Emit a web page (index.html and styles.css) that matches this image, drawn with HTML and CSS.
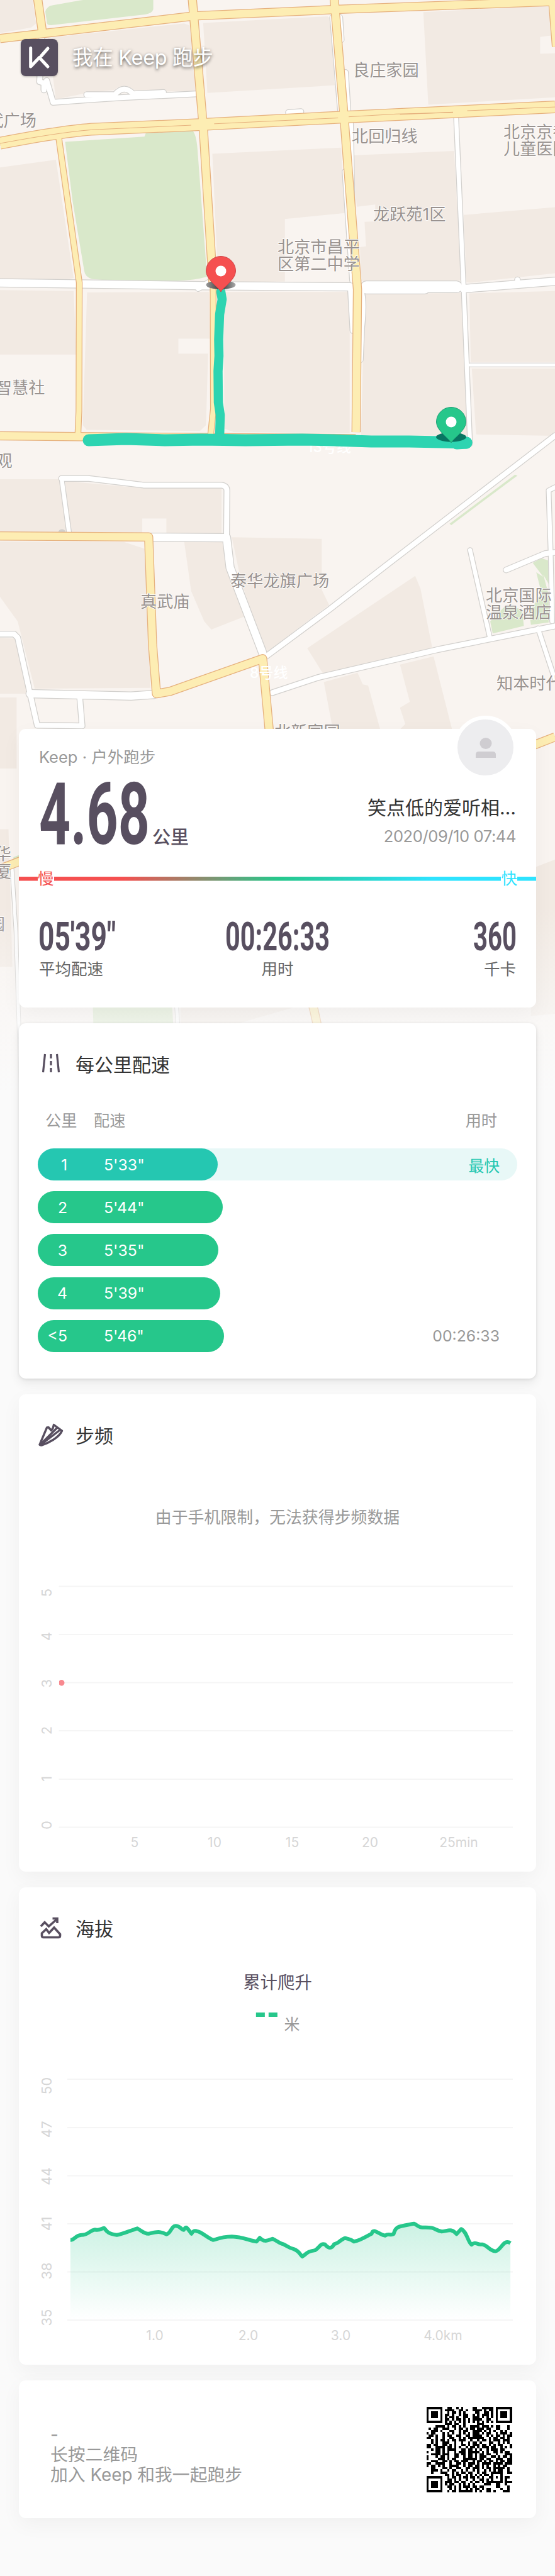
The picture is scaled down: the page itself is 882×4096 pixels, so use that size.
FILE: index.html
```html
<!DOCTYPE html>
<html lang="zh-CN">
<head>
<meta charset="utf-8">
<title>我在 Keep 跑步</title>
<link rel="stylesheet" href="styles.css">
</head>
<body>
<div class="page">
<svg class="map" viewBox="0 0 882 1740" width="882" height="1740">
  <defs>
    <linearGradient id="fade" x1="0" y1="0" x2="0" y2="1"><stop offset="0" stop-color="#fafafa" stop-opacity="0"/><stop offset=".7" stop-color="#fafafa" stop-opacity=".72"/><stop offset="1" stop-color="#fafafa"/></linearGradient>
    <linearGradient id="shade"><stop offset="0" stop-color="#999"/><stop offset=".5" stop-color="#333"/><stop offset="1" stop-color="#aaa"/></linearGradient>
  </defs>
  <rect width="882" height="1740" fill="#f9f4f0"/>
  <g transform="scale(.5625 .3714)">
    <g class="block">
      <path d="M0 0H92L102 100L88 118L0 142Z"/>
      <path d="M135 162L520 100L537 110L552 390L465 392L380 385Q350 350 322 385L240 400L158 425Z"/>
      <path d="M574 98L925 70L934 80L946 365L586 398Z"/>
      <path d="M1196 52L1554 24L1568 150L1526 158V230L1568 228V417L1210 448Z"/>
      <path d="M0 717L158 684L208 1190L195 1195L0 1198Z"/>
      <path d="M600 658L963 632L975 912L805 938V1205L690 1208L616 1195Z"/>
      <path d="M996 665L1283 646L1303 1200L1020 1203L1017 1058L1034 1055L1030 950L1060 948V876L1008 885Z"/>
      <path d="M1310 920L1568 887V1170L1330 1210L1318 1208Z"/>
      <path d="M0 1242L208 1246L216 1518H0Z"/>
      <path d="M246 1252L590 1250L593 1450H504V1514H588L582 1820L565 1845L245 1840L234 1820Z"/>
      <path d="M632 1250H988V1855L660 1850L634 1835Z"/>
      <path d="M1030 1254L1200 1256L1303 1254L1325 1865H1020Z"/>
      <path d="M1326 1256L1568 1246V1550H1330Z"/>
      <path d="M1333 1578H1568V1866L1345 1860Z"/>
      <path d="M0 2052H170L200 2280H0Z"/>
      <path d="M185 2060L405 2090L626 2088V2285H470V2220H402V2280H195Z"/>
      <path d="M0 2318L350 2320L410 2350L425 2945L98 2948L50 2660L0 2555Z"/>
      <path d="M520 2315L635 2320L690 2640L597 2695L577 2660L540 2530Z"/>
      <path d="M655 2300L909 2307V2525L930 2590L755 2790L725 2700L680 2480Z"/>
      <path d="M1173 2466L1188 2520L1222 2780L915 2890L868 2775Z"/>
      <path d="M915 2920L1010 2880L1025 2930L1040 2935L1088 3200L950 3200Z"/>
      <path d="M1130 2845L1225 2810L1290 3200H1080L1145 3100L1130 3030L1158 3005Z"/>
      <path d="M0 2730L50 2735L80 2970H0Z"/>
      <path d="M0 2986H47V3290H0Z"/>
      <path d="M1500 3720L1568 3680V4340L1500 4350Z"/>
      <path d="M0 3550H24L35 4140H0Z"/>
      <path d="M510 4300L860 4300L630 4400L510 4430Z"/>
    </g>
    <g fill="#d9e8ca">
      <path d="M128 50Q132 25 150 22L225 2L235 0H433V40Q430 58 410 62L145 108Q130 108 132 90Z"/>
      <path d="M184 607L408 585L412 570L545 561Q555 580 558 640L585 1185Q550 1200 500 1203H330L260 1195Q240 1185 238 1160L205 860Z"/>
      <path d="M1270 2242L1455 2032L1462 2036L1275 2248ZM1500 1935L1568 1855V1870L1502 1942Z"/>
      <path d="M1505 2410L1530 2390L1550 2400V2500L1535 2460L1550 2545V2665L1500 2675L1495 2620L1530 2540L1515 2450L1535 2470Z"/>
      <path d="M1385 2660L1430 2590L1475 2610L1480 2680L1392 2712Z"/>
      <path d="M262 4300H486L492 4450H265Z"/>
      <path d="M38 3670L55 3660V3690H38Z"/>
    </g>
    <g class="r case white">
      <path class="w9" id="w1" d="M118 160L112 350L124 355V385M132 345L150 438L240 428L340 418L555 402"/>
      <path class="w9" d="M245 405L325 405Q350 360 376 402L462 396"/>
      <path class="w9" d="M815 482L850 478M940 75L963 490M960 75L964 170M976 310L984 500M975 735L996 1200M990 520L996 1000"/>
      <path class="w7" d="M1288 480L1310 1235L1328 1900"/>
      <path class="w12" d="M0 1211L570 1223L990 1228M1310 1236L1568 1204"/>
      <path class="w20" d="M1035 1228H1290M1035 1233H1200"/>
      <path class="w9" d="M1462 1215V1198M560 1235L600 1200M990 1230L997 1415M1020 1240Q1030 1290 1022 1400L1018 1540"/>
      <path class="w5" d="M1328 1562H1568"/>
      <path class="w9" d="M174 2280H176" />
      <path class="w7" d="M195 2280L174 2048"/>
      <path class="w9" d="M174 2048H248L405 2077H625Q641 2080 641 2100L640 2300"/>
      <path class="w12" d="M425 2300L640 2302L650 2430L742 2795"/>
      <path class="w9" d="M752 2810L930 2610L1100 2410L1568 1865"/>
      <path class="w7" d="M1328 2355L1384 2730M1550 2100L1556 2380L1560 2660M1520 2690L1568 2910M1568 2086L1550 2100"/>
      <path class="w9" d="M1430 2440L1540 2370L1568 2365M770 2965L900 2900L1240 2780L1568 2680"/>
      <path class="w9" d="M0 2715H40L50 2730L85 2970L105 3105L232 3108L225 2980"/>
      <path class="w12" d="M85 2970L370 2980L435 2973"/>
      <path class="w5" d="M34 3720L45 3990L60 4700M0 3725L55 3685M498 4290L505 4450"/>
    </g>
    <g class="r fill white">
      <path class="w9" d="M118 160L112 350L124 355V385M132 345L150 438L240 428L340 418L555 402"/>
      <path class="w9" d="M245 405L325 405Q350 360 376 402L462 396"/>
      <path class="w9" d="M815 482L850 478M940 75L963 490M960 75L964 170M976 310L984 500M975 735L996 1200M990 520L996 1000"/>
      <path class="w7" d="M1288 480L1310 1235L1328 1900"/>
      <path class="w12" d="M0 1211L570 1223L990 1228M1310 1236L1568 1204"/>
      <path class="w20" d="M1035 1228H1290M1035 1233H1200"/>
      <path class="w9" d="M1462 1215V1198M560 1235L600 1200M990 1230L997 1415M1020 1240Q1030 1290 1022 1400L1018 1540"/>
      <path class="w5" d="M1328 1562H1568"/>
      <path class="w7" d="M195 2280L174 2048"/>
      <path class="w9" d="M174 2048H248L405 2077H625Q641 2080 641 2100L640 2300"/>
      <path class="w12" d="M425 2300L640 2302L650 2430L742 2795"/>
      <path class="w9" d="M752 2810L930 2610L1100 2410L1568 1865"/>
      <path class="w7" d="M1328 2355L1384 2730M1550 2100L1556 2380L1560 2660M1520 2690L1568 2910M1568 2086L1550 2100"/>
      <path class="w9" d="M1430 2440L1540 2370L1568 2365M770 2965L900 2900L1240 2780L1568 2680"/>
      <path class="w9" d="M0 2715H40L50 2730L85 2970L105 3105L232 3108L225 2980"/>
      <path class="w12" d="M85 2970L370 2980L435 2973"/>
      <path class="w5" d="M34 3720L45 3990L60 4700M0 3725L55 3685M498 4290L505 4450"/>
    </g>
    <g class="r case yellow">
      <path class="w12" d="M106 -10L120 140M543 -10L574 540L602 1220M944 -10L972 500L1010 1240L1006 1850"/>
      <path class="w12" d="M0 165L300 112L550 68L960 40L1568 6M1562 10L1572 200"/>
      <path class="w20" d="M0 613Q200 555 280 552L560 534L960 502L1568 458"/>
      <path class="w9" d="M166 590L224 1210L223 1760L220 1865M602 1220L603 1750L595 1865"/>
      <path class="w12" d="M0 1866L220 1869L1005 1878"/>
      <path class="w12" d="M0 2295L420 2299L431 2760L442 2970L480 2960L742 2820L765 3200L775 3400"/>
      <path class="w12" d="M1500 3195L1568 3155M0 3720L60 3685M865 4200L888 4330L905 4450"/>
    </g>
    <g class="r fill yellow">
      <path class="w12" d="M106 -10L120 140M543 -10L574 540L602 1220M944 -10L972 500L1010 1240L1006 1850"/>
      <path class="w12" d="M0 165L300 112L550 68L960 40L1568 6M1562 10L1572 200"/>
      <path class="w20" d="M0 613Q200 555 280 552L560 534L960 502L1568 458"/>
      <path class="w9" d="M166 590L224 1210L223 1760L220 1865M602 1220L603 1750L595 1865"/>
      <path class="w12" d="M0 1866L220 1869L1005 1878"/>
      <path class="w12" d="M0 2295L420 2299L431 2760L442 2970L480 2960L742 2820L765 3200L775 3400"/>
      <path class="w12" d="M1500 3195L1568 3155M0 3720L60 3685M865 4200L888 4330L905 4450"/>
    </g>
    <path class="median" d="M0 614Q200 558 280 554L540 536M605 530L955 505M985 500L1120 488L1280 482M1320 474L1568 458M1130 490L1280 480"/>
  </g>
  <g class="place">
    <text x="561" y="121">良庄家园</text>
    <text x="58" y="201" text-anchor="end">代广场</text>
    <text x="559" y="225.500">北回归线</text>
    <text x="800" y="218.500">北京京都</text><text x="800" y="246">儿童医院</text>
    <text x="593" y="350">龙跃苑1区</text>
    <text x="441" y="401.500">北京市昌平</text><text x="441" y="429">区第二中学</text>
    <text x="71.400" y="626" text-anchor="end">智慧社</text>
    <text x="19.700" y="742" text-anchor="end">观</text>
    <text x="366" y="933">泰华龙旗广场</text>
    <text x="223" y="966">真武庙</text>
    <text x="772" y="956">北京国际</text><text x="772" y="983">温泉酒店</text>
    <text x="789" y="1096">知本时代</text>
    <text x="436" y="1173">北新家园</text>
    <text x="18" y="1367" text-anchor="end">华</text><text x="18" y="1395" text-anchor="end">厦</text>
    <text x="8" y="1479" text-anchor="end">园</text>
  </g>
  <g class="line-name"><text x="488" y="719">13号线</text><text x="397" y="1078">8号线</text></g>
  <g class="route">
    <path class="route-v" d="M351 464L353 476L349 500L347.500 540L348 566L346.500 590L347 640L350 660L349 695"/>
    <path class="route-h" d="M141 700L170 699L200 698L262 700L320 699L390 700L480 699L530 700L590 702L650 702L700 703L741 704"/>
    <path class="route-h" d="M726 705L741 704"/>
  </g>
  <g transform="translate(351 464)">
    <ellipse cx="0" cy="-11" rx="23.500" ry="7" fill="url(#shade)"/>
    <path d="M0 0C-3 -7 -23.500 -19 -23.500 -33A23.500 23.500 0 0 1 23.500 -33C23.500 -19 3 -7 0 0Z" fill="#f55050" stroke="#cf4548"/>
    <circle cy="-33" r="8.500" fill="#fff"/>
  </g>
  <g transform="translate(717 704)">
    <ellipse cx="0" cy="-9" rx="24" ry="7.500" fill="#087562"/>
    <path d="M0 0C-3 -7 -23.500 -19 -23.500 -33A23.500 23.500 0 0 1 23.500 -33C23.500 -19 3 -7 0 0Z" fill="#26c78b" stroke="#1e9f75"/>
    <circle cy="-33" r="8.500" fill="#fff"/>
  </g>
  <rect y="1440" width="882" height="300" fill="url(#fade)"/>
</svg>

<header class="top">
  <svg class="logo" viewBox="0 0 59 59" width="59" height="59"><path d="M15.700 14.500V44L29.500 29.500L43 44M43 15L32.500 27" fill="none" stroke="#fff" stroke-width="5" stroke-linecap="round" stroke-linejoin="round"/></svg>
  <h1 class="top-title">我在 Keep 跑步</h1>
</header>

<main class="cards">
  <section class="card summary">
    <div class="avatar"><svg viewBox="0 0 36 32" width="36" height="32"><ellipse cx="18" cy="9" rx="9.500" ry="9" fill="#cfcdd1"/><path d="M2 32V27Q2 22 7 22H29Q34 22 34 27V32Z" fill="#cfcdd1"/></svg></div>
    <div class="kind">Keep · 户外跑步</div>
    <div class="summary-main">
      <div class="distance">
        <svg class="din" width="176" height="104"><text x="0" y="101" font-size="137" textLength="176" lengthAdjust="spacingAndGlyphs">4.68</text></svg>
        <span class="unit">公里</span>
      </div>
      <div class="who"><div class="name">笑点低的爱听相…</div><div class="date">2020/09/10 07:44</div></div>
    </div>
    <div class="speed"><span class="slow">慢</span><span class="fast">快</span></div>
    <div class="stats">
      <div class="stat"><svg class="din" width="122" height="50"><text x="-1" y="48" font-size="63" textLength="123" lengthAdjust="spacingAndGlyphs">05′39″</text></svg><span>平均配速</span></div>
      <div class="stat mid"><svg class="din" width="166" height="50"><text x="0" y="48" font-size="63" textLength="166" lengthAdjust="spacingAndGlyphs">00:26:33</text></svg><span>用时</span></div>
      <div class="stat end"><svg class="din" width="68" height="50"><text x="0" y="48" font-size="63" textLength="69" lengthAdjust="spacingAndGlyphs">360</text></svg><span>千卡</span></div>
    </div>
  </section>

  <section class="card pace">
    <h2 class="card-title"><svg class="icon" viewBox="0 0 40 40" width="40" height="40" fill="none" stroke="#584f60" stroke-width="3.200"><path d="M10.500 5L7.500 34M29.500 5L32.500 34M20 5V12M20 16V23M20 27V34"/></svg>每公里配速</h2>
    <div class="pace-head"><span class="c1">公里</span><span class="c2">配速</span><span>用时</span></div>
    <div class="rows">
      <div class="row best"><div class="bar" style="width:286px"><b>1</b><i>5'33"</i></div><em>最快</em></div>
      <div class="row"><div class="bar" style="width:294px"><b>2</b><i>5'44"</i></div></div>
      <div class="row"><div class="bar" style="width:287px"><b>3</b><i>5'35"</i></div></div>
      <div class="row"><div class="bar" style="width:290px"><b>4</b><i>5'39"</i></div></div>
      <div class="row"><div class="bar" style="width:296px"><b>&lt;5</b><i>5'46"</i></div><em>00:26:33</em></div>
    </div>
  </section>

  <section class="card cadence">
    <h2 class="card-title"><svg class="icon" viewBox="0 0 40 40" width="40" height="40" fill="none" stroke="#584f60" stroke-width="3.400" stroke-linejoin="round" stroke-linecap="round"><path d="M2.500 35L13.500 9L16 8.500L20.500 13.500L23 10L24.500 4.500L37.500 14C33 25 15 34 5 37Q1 37 2.500 35ZM4 35L29.500 9.500M4 36L34 13"/></svg>步频</h2>
    <p class="notice">由于手机限制，无法获得步频数据</p>
    <svg class="chart" viewBox="30 2507 822 445" width="822" height="445">
      <path class="grid" d="M93.500 2522.500H815M93.500 2599H815M93.500 2675.500H815M93.500 2752H815M93.500 2829H815M93.500 2905.500H815"/>
      <path d="M94 2673A4.700 4.700 0 1 1 94 2678.500Z" fill="#f8898f"/>
      <g class="ylab">
        <text transform="translate(81.500 2532.600) rotate(-90)">5</text><text transform="translate(81.500 2602) rotate(-90)">4</text><text transform="translate(81.500 2676.600) rotate(-90)">3</text><text transform="translate(81.500 2751.600) rotate(-90)">2</text><text transform="translate(81.500 2828.300) rotate(-90)">1</text><text transform="translate(81.500 2902) rotate(-90)">0</text>
      </g>
      <g class="xlab"><text x="214" y="2937">5</text><text x="341" y="2937">10</text><text x="464.500" y="2937">15</text><text x="588" y="2937">20</text><text x="729" y="2937">25min</text></g>
    </svg>
  </section>

  <section class="card climb">
    <h2 class="card-title"><svg class="icon" viewBox="0 0 40 40" width="40" height="40" fill="none" stroke="#584f60" stroke-width="3.600" stroke-linejoin="miter"><path d="M4 18L10 11.500L16.500 18L29 7M22.500 5.500H30V13M5.500 33V29L12.500 22.500L17 28.500L25 20L34.500 30.500V33Q34.500 35.500 32 35.500H8Q5.500 35.500 5.500 33Z"/></svg>海拔</h2>
    <p class="climb-label">累计爬升</p>
    <svg class="climb-value" viewBox="30 3170 822 60" width="822" height="60"><text class="dash" x="404" y="3223" font-size="63" textLength="40" lengthAdjust="spacingAndGlyphs">--</text><text class="meter" x="464" y="3228">米</text></svg>
    <svg class="chart" viewBox="30 3290 822 445" width="822" height="445">
      <defs><linearGradient id="area" gradientUnits="userSpaceOnUse" x1="0" y1="1105" x2="0" y2="1419"><stop offset="0" stop-color="#26c78b" stop-opacity=".24"/><stop offset="1" stop-color="#26c78b" stop-opacity="0"/></linearGradient></defs>
      <path class="grid" d="M107 3306H815M107 3383H815M107 3459.500H815M107 3536H815M107 3612.500H815M107 3689H815"/>
      <g transform="translate(0 2982.400) scale(.5625 .4981)">
        <path fill="url(#area)" d="M199 1163C211 1163 212 1148 230 1147C250 1147 252 1133 268 1130C281 1134 287 1126 294 1125C300 1130 300 1143 330 1147C350 1143 365 1134 388 1126C400 1134 408 1144 420 1143C440 1138 450 1133 470 1145C482 1144 484 1117 497 1118C510 1119 514 1132 519 1131C526 1118 526 1120 541 1143C548 1130 552 1134 556 1135C570 1137 584 1155 602 1163C615 1162 616 1153 655 1152C685 1153 705 1165 725 1168L734 1156C744 1168 750 1168 770 1159C782 1165 790 1175 800 1176C815 1184 815 1188 830 1192C845 1198 848 1210 854 1216C868 1206 866 1200 890 1196C903 1188 905 1172 918 1177C927 1190 937 1193 944 1176C955 1176 965 1159 975 1157C990 1162 990 1160 1000 1168C1020 1164 1040 1148 1050 1143C1055 1122 1070 1146 1088 1149C1098 1141 1105 1150 1112 1144C1118 1118 1125 1120 1170 1111C1180 1116 1182 1124 1195 1123C1232 1121 1226 1132 1248 1136C1265 1135 1275 1124 1290 1144L1303 1128C1320 1138 1320 1165 1332 1178C1344 1166 1348 1180 1363 1177C1380 1182 1383 1198 1400 1199C1415 1197 1423 1158 1442 1173V1419H199Z"/>
        <path class="curve" d="M199 1163C211 1163 212 1148 230 1147C250 1147 252 1133 268 1130C281 1134 287 1126 294 1125C300 1130 300 1143 330 1147C350 1143 365 1134 388 1126C400 1134 408 1144 420 1143C440 1138 450 1133 470 1145C482 1144 484 1117 497 1118C510 1119 514 1132 519 1131C526 1118 526 1120 541 1143C548 1130 552 1134 556 1135C570 1137 584 1155 602 1163C615 1162 616 1153 655 1152C685 1153 705 1165 725 1168L734 1156C744 1168 750 1168 770 1159C782 1165 790 1175 800 1176C815 1184 815 1188 830 1192C845 1198 848 1210 854 1216C868 1206 866 1200 890 1196C903 1188 905 1172 918 1177C927 1190 937 1193 944 1176C955 1176 965 1159 975 1157C990 1162 990 1160 1000 1168C1020 1164 1040 1148 1050 1143C1055 1122 1070 1146 1088 1149C1098 1141 1105 1150 1112 1144C1118 1118 1125 1120 1170 1111C1180 1116 1182 1124 1195 1123C1232 1121 1226 1132 1248 1136C1265 1135 1275 1124 1290 1144L1303 1128C1320 1138 1320 1165 1332 1178C1344 1166 1348 1180 1363 1177C1380 1182 1383 1198 1400 1199C1415 1197 1423 1158 1442 1173"/>
      </g>
      <g class="ylab">
        <text transform="translate(81.500 3316.600) rotate(-90)">50</text><text transform="translate(81.500 3386) rotate(-90)">47</text><text transform="translate(81.500 3460.500) rotate(-90)">44</text><text transform="translate(81.500 3536) rotate(-90)">41</text><text transform="translate(81.500 3611) rotate(-90)">38</text><text transform="translate(81.500 3685) rotate(-90)">35</text>
      </g>
      <g class="xlab"><text x="246" y="3720.500">1.0</text><text x="394.500" y="3720.500">2.0</text><text x="541.500" y="3720.500">3.0</text><text x="704" y="3720.500">4.0km</text></g>
    </svg>
  </section>

  <section class="card invite">
    <div class="invite-text"><p>-</p><p>长按二维码</p><p>加入 Keep 和我一起跑步</p></div>
    <svg class="qr" id="qr" viewBox="0 0 37 37" width="137" height="136" shape-rendering="crispEdges"></svg>
  </section>
</main>
</div>
<script src="qr.js"></script>
</body>
</html>
```
FILE: styles.css
```css
body { margin: 0; background: #fafafa; font-family: Inter, "Noto Sans CJK SC", sans-serif; color: #333; }
.page { position: relative; width: 882px; height: 4096px; overflow: hidden; }
.map { position: absolute; left: 0; top: 0; display: block; }
.block { fill: #f2eae3; }
.r path, .median, .curve { fill: none; vector-effect: non-scaling-stroke; stroke-linejoin: round; }
.r path { stroke-linecap: round; }
.yellow path { stroke-linecap: butt; }
.case.white path { stroke: #d2d0cd; }
.fill.white path { stroke: #fff; }
.case.yellow path { stroke: #e6b17e; }
.fill.yellow path { stroke: #fdedb3; }
.case .w5 { stroke-width: 7px; } .fill .w5 { stroke-width: 5px; }
.case .w7 { stroke-width: 9px; } .fill .w7 { stroke-width: 6.5px; }
.case .w9 { stroke-width: 10.5px; } .fill .w9 { stroke-width: 8px; }
.case .w12 { stroke-width: 14.5px; } .fill .w12 { stroke-width: 12px; }
.case .w20 { stroke-width: 20px; } .fill .w20 { stroke-width: 17.5px; }
.median { stroke: #e6b17e; stroke-width: 1px; }
.place { font-size: 26.2px; fill: #99928f; stroke: #fff; stroke-width: 1.5px; paint-order: stroke; }
.line-name { font-size: 23px; font-weight: 500; fill: #fff; }
.route { fill: none; stroke: #2dd4b1; stroke-linecap: round; stroke-linejoin: round; }
.route-v { stroke-width: 14.5px; }
.route-h { stroke-width: 19px; }

.top { position: relative; display: flex; align-items: center; gap: 23px; padding: 62px 0 0 33px; height: 59px; }
.logo { background: #584f60; border-radius: 8px; box-shadow: 0 1px 3px rgba(0,0,0,.3); }
.top-title { margin: 0; font-size: 32.5px; line-height: 59px; font-weight: 400; color: #fff; text-shadow: 0 2px 5px rgba(0,0,0,.65); letter-spacing: -.3px; }

.cards { position: relative; display: flex; flex-direction: column; gap: 25px; padding: 1038px 30px 0; }
.card { position: relative; box-sizing: border-box; border-radius: 11px; background: #fff; box-shadow: 0 10px 32px rgba(0,0,0,.045); }
.summary { height: 443px; padding: 27px 32px 0; }
.avatar { position: absolute; right: 30px; top: -21px; width: 89px; height: 89px; border: 6px solid #fff; border-radius: 50%; background: #ededef; display: flex; align-items: center; justify-content: center; }
.kind { font-size: 25.5px; line-height: 36px; color: #999; }
.summary-main { height: 123px; display: flex; justify-content: space-between; align-items: flex-end; }
.din { display: block; overflow: visible; font-family: Roboto, sans-serif; font-weight: 700; fill: #584f60; }
.distance { display: flex; align-items: flex-end; gap: 4px; }
.unit { font-size: 29px; line-height: 32px; font-weight: 500; color: #584f60; margin-bottom: -3px; }
.who { text-align: right; }
.name { font-size: 30px; line-height: 42px; }
.date { font-size: 25.5px; line-height: 36px; color: #999; margin: 7px 0 -3px; letter-spacing: -.4px; }
.speed { margin: 34px -32px 0; padding: 0 30px; height: 36px; display: flex; justify-content: space-between; align-items: center; font-size: 25.5px; line-height: 36px; background: linear-gradient(90deg, #f55050 20%, #26c78b 50%, #2ee3ff 80%) center / 100% 6.5px no-repeat; }
.speed span { background: #fff; }
.slow { color: #f55050; }
.fast { color: #2ee3ff; }
.stats { margin-top: 48px; display: grid; grid-template-columns: 1fr 1fr 1fr; }
.stat { display: flex; flex-direction: column; gap: 10px; font-size: 25.5px; line-height: 36px; color: #666; }
.mid { align-items: center; }
.end { align-items: flex-end; }

.card-title { margin: 0; display: flex; align-items: center; gap: 19px; height: 40px; font-size: 30px; font-weight: 400; color: #333; }
.pace, .cadence, .climb { padding-top: 44px; }
.pace .card-title, .cadence .card-title, .climb .card-title { padding-left: 31px; }
.pace { height: 565px; box-shadow: 0 8px 16px rgba(0,0,0,.07), 0 1px 5px rgba(0,0,0,.1); }
.pace-head { display: flex; padding: 0 62px 0 42px; margin-top: 53px; line-height: 36px; font-size: 25.2px; color: #999; }
.c1 { width: 77px; }
.c2 { flex: 1; }
.rows { margin: 26px 30px 0; display: grid; gap: 17.2px; }
.row { height: 51px; border-radius: 26px; display: flex; justify-content: space-between; align-items: center; padding-right: 28px; font-size: 24.8px; color: #999; }
.best { background: #e8f8f7; color: #25c7b1; }
.bar { height: 51px; border-radius: 26px; background: #26c78b; color: #fff; display: flex; align-items: center; }
.best .bar { background: #25c7b1; }
.bar b { width: 47px; text-align: right; font-weight: 400; }
.bar i { font-style: normal; margin-left: 58px; }
.row em { font-style: normal; }

.cadence { height: 759px; }
.notice { margin: 94px 0 76px; text-align: center; font-size: 25.9px; line-height: 36px; color: #999; }
.chart, .climb-value { display: block; }
.grid { fill: none; stroke: #f5f5f5; stroke-width: 2px; }
.ylab, .xlab { font-size: 21px; fill: #d6d6d6; text-anchor: middle; }
.ylab { font-size: 22px; }

.climb { height: 759px; }
.climb-label { margin: 49px 0 0; text-align: center; font-size: 27.4px; line-height: 36px; color: #584f60; }
.climb .chart { margin-top: 60px; }
.dash { font-family: Roboto, sans-serif; font-weight: 700; fill: #26c78b; }
.meter { font-size: 25px; fill: #999; text-anchor: middle; }
.curve { stroke: #26c78b; stroke-width: 6px; }

.invite { height: 219px; padding: 0 38px 0 50px; display: flex; justify-content: space-between; align-items: flex-start; }
.invite-text { margin-top: 70px; font-size: 27.8px; line-height: 32px; color: #999; }
.invite-text p { margin: 0; }
.qr { margin-top: 42px; }
```
FILE: qr.js
```
const rows = [
  "#######..##..#.#....##..#####.#######",
  "#.....#.####..##.#..####.#.##.#.....#",
  "#.###.#..#.##.#.#....##..##.#.#.###.#",
  "#.###.#.##.#..#.##..#.#.###.#.#.###.#",
  "#.###.#.#.##.#..##..###.#.#.#.#.###.#",
  "#.....#.##.#.##.#.#.####..##..#.....#",
  "#######.#.#.#.#.#.#.#.#.#.#.#.#######",
  "........###.##..#.....###............",
  "....####.#.##.#.#..####.###.#.##...#.",
  ".#.##..###..#.##.#.##.###.##..##...#.",
  "..###.#...##..#.##..####.#.#.#..#.#..",
  "#.##...#.#.#..#.#.#.###.#.##..#.###.#",
  ".##.#..#.##..##..##.####..#.#.##.#.##",
  "##..#..#..##..#.#.#######..#.##.##.#.",
  "..#.#.##.#.##.###..#..#.##.#.###.###.",
  "..#.#..###..#..#..#.##.#...##..#.#.#.",
  "##.##..##.#.#..##.#.###.##.#.#.##...#",
  "##..####.##.#.#..#.##.#.###.##..#.#.#",
  "..#.##.#.####..##.##.#.#..#.###.##...",
  "#...##.#.#..#.###.#####.#.#..##.#.##.",
  "..####.###..##.##.##.#.##.##..#...###",
  "#...#.##.#..##..#.##.#.###..##.#.##.#",
  "#....###.#.##...######.##.##..###..##",
  "..###..##.#.##.###..#.##.#.##.#.##.##",
  "##..####..#..##.#.###.#.####.####.###",
  "#.##.#.#..####..#.##.##.#.#..#.#.##..",
  "..##...##.#..##..##.###.#.##.#####.#.",
  "..###.#..#.##..#.#..#.#..#.#.#.##..#.",
  "..#...###..#.#.##.##..#.##..#####..##",
  "........##.#.##..#.#.#.#.##.#...#....",
  "#######..#.##.#.##.##.#.#..##.#.#.##.",
  "#.....#..##.#.#..#..#..##.#.#...#.#..",
  "#.###.#.###.##.##..#.##.#.#######.###",
  "#.###.#.#.##..#.#.#.#....###..##..#..",
  "#.###.#..##.#.#.###.##.##.....##...#.",
  "#.....#...#.#.#..#.#.##.#.##....#..#.",
  "#######..#.##.######.#.#..##.#...###."
];
let d = "";
rows.forEach((row, y) => [...row].forEach((c, x) => { if (c === "#") d += `M${x} ${y}h1v1h-1z`; }));
const path = document.createElementNS("http://www.w3.org/2000/svg", "path");
path.setAttribute("d", d);
document.getElementById("qr").appendChild(path);
```
